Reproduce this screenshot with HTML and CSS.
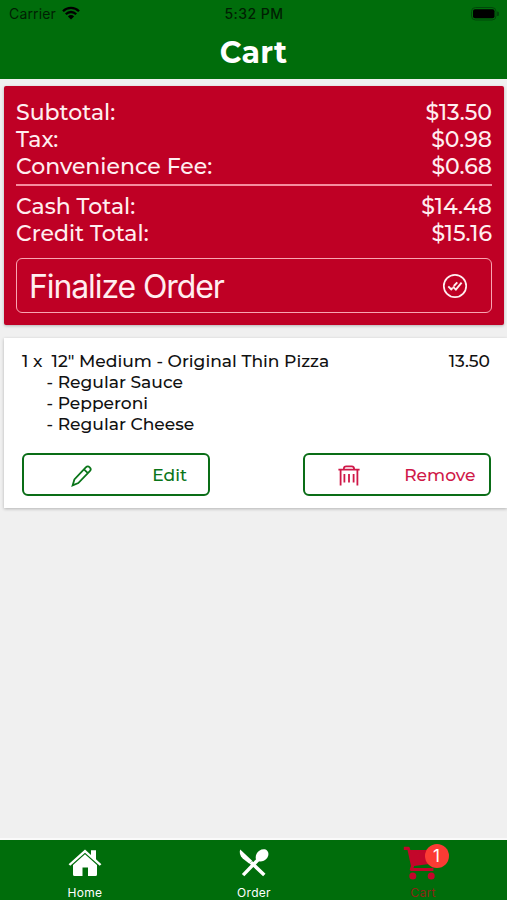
FILE: index.html
```html
<!DOCTYPE html>
<html lang="en">
<head>
    <meta charset="UTF-8" />
    <meta name="viewport" content="width=device-width, initial-scale=1.0" />
    <title>Cart</title>
    <link rel="stylesheet" href="styles.css">
</head>
<body>
  <header>
    <div class="status-bar">
      <div class="carrier">
        <span>Carrier</span>
        <svg class="wifi" viewBox="0 0 18 14">
          <path d="M1 5.2a11.3 11.3 0 0 1 16 0" />
          <path d="M3.8 8.2a7.3 7.3 0 0 1 10.4 0" />
          <path class="dot" d="M9 13.6 5.9 10.4a4.3 4.3 0 0 1 6.2 0z" />
        </svg>
      </div>
      <div class="time">5:32 PM</div>
      <div class="battery">
        <svg viewBox="0 0 30 14">
          <rect class="shell" x="2.5" y="0.5" width="24.5" height="12.5" rx="4" />
          <rect x="4" y="2.3" width="21.5" height="9" rx="2" />
          <path class="tip" d="M28 4.5a2.3 2.3 0 0 1 0 4.6z" />
        </svg>
      </div>
    </div>
    <h1>Cart</h1>
  </header>

  <main>
    <section class="card summary">
      <div class="row"><span>Subtotal:</span><span>$13.50</span></div>
      <div class="row"><span>Tax:</span><span>$0.98</span></div>
      <div class="row"><span>Convenience Fee:</span><span>$0.68</span></div>
      <hr>
      <div class="row"><span>Cash Total:</span><span>$14.48</span></div>
      <div class="row"><span>Credit Total:</span><span>$15.16</span></div>
      <button class="finalize">
        <span>Finalize Order</span>
        <svg viewBox="0 0 26 26">
          <circle cx="13" cy="13" r="11.2" />
          <path class="checks" d="M6.3 13.4 9.2 16.4 10.6 15M10.8 13.6 13.9 16.6 19.6 9.6M11.8 13 15.3 9.4" />
        </svg>
      </button>
    </section>

    <section class="card item">
      <div class="item-head">
        <span>1 x&nbsp; 12" Medium - Original Thin Pizza</span>
        <span class="price">13.50</span>
      </div>
      <ul>
        <li>- Regular Sauce</li>
        <li>- Pepperoni</li>
        <li>- Regular Cheese</li>
      </ul>
      <div class="actions">
        <button class="edit">
          <svg viewBox="0 0 22 22">
            <path d="M1.6 20.4 3.4 14.4 14.8 2.4a2.6 2.6 0 0 1 4 3.8L7.3 18.1zM13 4.4 16.9 8.1" />
          </svg>
          <span>Edit</span>
        </button>
        <button class="remove">
          <svg viewBox="0 0 22 22">
            <path d="M0.4 4.7H21.6M2.6 4.7V20.6M19.4 4.7V20.6M5.8 4.5C5.8 2 6.7 1.3 8.3 1.3H13.7C15.3 1.3 16.2 2 16.2 4.5M6.4 9V17.6M11 9V17.6M15.6 9V17.6" />
          </svg>
          <span>Remove</span>
        </button>
      </div>
    </section>
  </main>

  <nav>
    <a href="#">
      <svg class="home" viewBox="0 0 34 28">
        <path d="M17 5.3 29 16V25.5Q29 27 27.5 27H20V18.5H14.5V27H6.5Q5 27 5 25.5V16z" />
        <path d="M17 .5 23 5.9V1.2H28V10.3L33.4 15.2 31.7 16.8 17 3.7 2.3 16.8.6 15.2z" />
      </svg>
      <span>Home</span>
    </a>
    <a href="#">
      <svg class="utensils" viewBox="0 0 30 28">
        <path d="M1.2 0.6 13.2 11.8 10.4 14.8 3.7 9.4C.8 6.6.2 3.7 1.2.6z" />
        <path class="handle" d="M11.8 13.2 25.3 26M4.1 26.1 19.5 10.3" />
        <path d="M17.4 11.7C15.8 8.2 17 4 20.3 1.8 23-.1 26.5-.1 28.2 1.7 30 3.6 29.8 7 27.7 9.5 25.3 12.4 21.3 13.3 17.4 11.7z" />
      </svg>
      <span>Order</span>
    </a>
    <a href="#" class="active">
      <div class="icon">
        <svg class="trolley" viewBox="0 0 34 34">
          <path d="M.8.8H5.4Q6.5.8 6.8 2L7.3 4H32.5L30 17.6 11.1 20 10.5 22H30.4V24.9H8.5Q6.2 24.9 7 22.5L8 20 4.5 4H.8z" />
          <circle cx="9.8" cy="30" r="3.5" />
          <circle cx="28.2" cy="30" r="3.5" />
        </svg>
        <b class="badge">1</b>
      </div>
      <span>Cart</span>
    </a>
  </nav>
</body>
</html>
```
FILE: styles.css
```css
* {
    margin: 0;
    padding: 0;
    box-sizing: border-box;
}

body {
    font-family: Montserrat, Inter, sans-serif;
    font-weight: 500;
    background: #f0f0f0;
    color: #111;
    display: flex;
    flex-direction: column;
    height: 100vh;
    overflow: hidden;
}

svg {
    display: block;
    flex: none;
}

button {
    font: inherit;
    background: none;
    cursor: pointer;
}

header {
    height: 79px;
    background: #006d0b;
}

.status-bar {
    display: grid;
    grid-template-columns: 1fr auto 1fr;
    align-items: center;
    height: 27px;
    padding: 0 8px 0 9px;
    font: 500 14px/27px Inter, sans-serif;
    letter-spacing: 0.45px;
    color: #001f03;
}

.carrier {
    display: flex;
    align-items: center;
    gap: 6px;
    font-weight: 400;
    letter-spacing: 0.15px;
}

.wifi {
    width: 18px;
    height: 14px;
    margin-top: -1px;
    fill: none;
    stroke: #000;
    stroke-width: 2.3;
}

    .wifi .dot {
        fill: #000;
        stroke: none;
    }

.battery {
    justify-self: end;
}

    .battery svg {
        width: 30px;
        height: 14px;
    }

    .battery .shell {
        fill: none;
        stroke: #00480a;
    }

    .battery .tip {
        fill: #00480a;
    }

h1 {
    padding-top: 1px;
    color: #fff;
    font-size: 30px;
    font-weight: 700;
    line-height: 50px;
    letter-spacing: 0.2px;
    text-align: center;
}

main {
    flex: 1;
    padding: 7px 0 0 4px;
    border-bottom: 2px solid #fafafa;
}

.card {
    box-shadow: 0 1px 3px rgba(0, 0, 0, 0.25);
}

.summary {
    height: 239px;
    margin-right: 3px;
    padding: 12.5px 12px 0;
    border-radius: 2px;
    background: #bf0025;
    color: #ffeef0;
}

.row {
    display: flex;
    justify-content: space-between;
    height: 27px;
    font-size: 22px;
    line-height: 28px;
}

hr {
    height: 2px;
    margin: 4.5px 0 7px;
    border: 0;
    background: #f58d9f;
}

.finalize {
    display: flex;
    align-items: center;
    justify-content: space-between;
    width: 100%;
    height: 55px;
    margin-top: 11px;
    padding: 0 23px 0 12px;
    border: 1.5px solid #f9a5b2;
    border-radius: 6px;
    color: #ffeef0;
    font: 400 32px/53px Inter, sans-serif;
    letter-spacing: -1.1px;
}

    .finalize span {
        padding-top: 2px;
    }

    .finalize svg {
        width: 26px;
        height: 26px;
        fill: none;
        stroke: #ffeef0;
        stroke-width: 1.7;
    }

    .finalize .checks {
        stroke-width: 1.9;
    }

.item {
    height: 170px;
    margin-top: 13px;
    padding: 12px 16px 0 18px;
    background: #fff;
    font-size: 17.1px;
    line-height: 21.1px;
}

.item-head {
    display: flex;
    justify-content: space-between;
}

.price {
    padding-right: 1px;
}

.item ul {
    padding-left: 24.5px;
    list-style: none;
}

.actions {
    display: flex;
    justify-content: space-between;
    margin-top: 18.6px;
}

    .actions button {
        display: flex;
        align-items: center;
        justify-content: space-between;
        width: 188px;
        height: 43px;
        border: 2px solid #0a6d17;
        border-radius: 6px;
    }

    .actions svg {
        width: 22px;
        height: 22px;
        margin-top: 4px;
        fill: none;
        stroke: currentColor;
        stroke-width: 1.8;
    }

    .actions span {
        padding-top: 1px;
    }

    .actions .edit {
        padding: 0 21px 0 46.5px;
        color: #0a7519;
    }

    .actions .remove {
        padding: 0 13.5px 0 33px;
        color: #cf1848;
    }

nav {
    display: grid;
    grid-template-columns: repeat(3, 1fr);
    height: 60px;
    background: #006d0b;
}

    nav a {
        display: flex;
        flex-direction: column;
        align-items: center;
        justify-content: space-between;
        padding-top: 9px;
        color: #fff;
        font: 400 12px/15px Inter, sans-serif;
        letter-spacing: 0.3px;
        text-decoration: none;
    }

    nav a > span {
        padding-left: 1px;
    }

    nav svg {
        fill: currentColor;
    }

    nav .active {
        padding-top: 6px;
        color: #c3062a;
    }

    nav .active > span {
        color: #8c2415;
    }

.home {
    width: 34px;
    height: 28px;
}

.utensils {
    width: 30px;
    height: 28px;
}

.handle {
    fill: none;
    stroke: #fff;
    stroke-width: 3.5;
}

.icon {
    position: relative;
    margin-right: 6px;
}

.trolley {
    width: 34px;
    height: 34px;
}

.badge {
    position: absolute;
    top: -2px;
    left: 22px;
    width: 24px;
    height: 24px;
    border-radius: 50%;
    background: #fb3b34;
    color: #fff;
    font-size: 17px;
    font-weight: 400;
    line-height: 24px;
    text-align: center;
}
```
